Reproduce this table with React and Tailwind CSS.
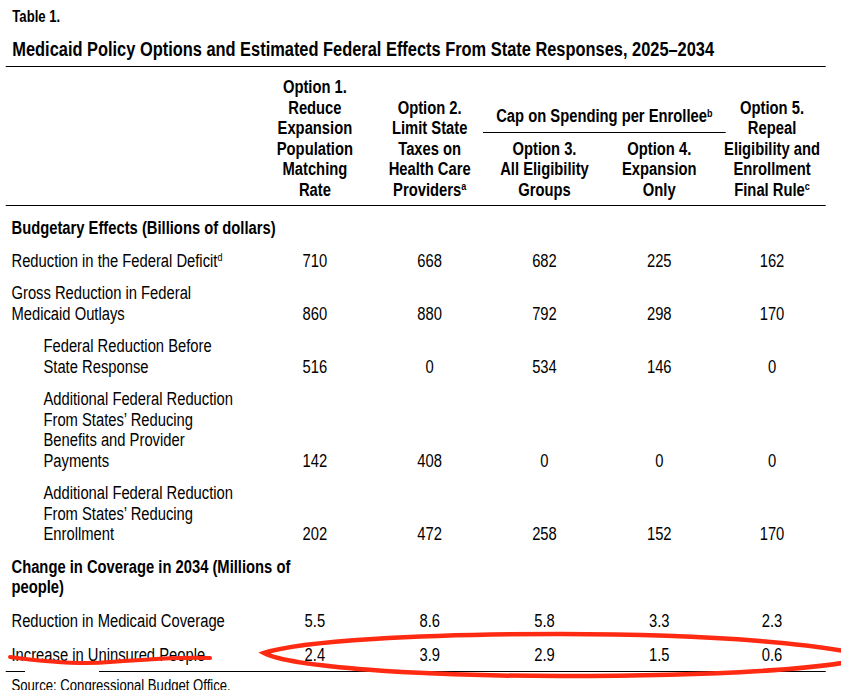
import React from "react";

const font = { fontFamily: '"Liberation Sans", Arial, sans-serif' };

const rows = [
  { label: <>Reduction in the Federal Deficit<sup className="text-[11px]">d</sup></>, vals: ["710", "668", "682", "225", "162"] },
  { label: <>Gross Reduction in Federal<br />Medicaid Outlays</>, vals: ["860", "880", "792", "298", "170"] },
  { label: <>Federal Reduction Before<br />State Response</>, vals: ["516", "0", "534", "146", "0"], indent: true },
  { label: <>Additional Federal Reduction<br />From States’ Reducing<br />Benefits and Provider<br />Payments</>, vals: ["142", "408", "0", "0", "0"], indent: true },
  { label: <>Additional Federal Reduction<br />From States’ Reducing<br />Enrollment</>, vals: ["202", "472", "258", "152", "170"], indent: true },
];

const rows2 = [
  { label: "Reduction in Medicaid Coverage", vals: ["5.5", "8.6", "5.8", "3.3", "2.3"], pt: "pt-[13px]" },
  { label: "Increase in Uninsured People", vals: ["2.4", "3.9", "2.9", "1.5", "0.6"], pt: "pt-[14px]" },
];

const widths = ["w-[134px]", "w-[146px]", "w-[134px]", "w-[146px]", "w-[129px]"];

function Row({ label, vals, indent, pt }) {
  return (
    <div className={`flex items-end ${pt || "pt-[12px]"}`}>
      <div className={`w-[310px] shrink-0 ${indent ? "pl-[46px]" : "pl-[7px]"}`}>{label}</div>
      {vals.map((v, i) => (
        <div key={i} className={`${widths[i]} shrink-0 text-center`}>{v}</div>
      ))}
    </div>
  );
}

export default function App() {
  return (
    <div className="relative w-[841px] h-[690px] overflow-hidden bg-white text-black" style={font}>
      <div className="w-[1026px] origin-top-left scale-x-[0.82]">
        <div className="pl-[15px] pt-[8px] text-[16px] font-bold leading-[18px]">Table 1.</div>
        <div className="pl-[15px] pt-[12px] text-[20px] font-bold leading-[23px]">
          Medicaid Policy Options and Estimated Federal Effects From State Responses, 2025–2034
        </div>
        <div className="ml-[7px] w-[1000px] text-[18px] leading-[20.5px]">
          <div className="mt-[5px] border-t border-black" />
          {/* header */}
          <div className="flex items-end pt-[10px] pb-[5px] font-bold border-b border-black">
            <div className="w-[310px] shrink-0" />
            <div className="w-[134px] shrink-0 text-center">Option 1.<br />Reduce<br />Expansion<br />Population<br />Matching<br />Rate</div>
            <div className="w-[146px] shrink-0 text-center">Option 2.<br />Limit State<br />Taxes on<br />Health Care<br />Providers<sup className="text-[11px]">a</sup></div>
            <div className="w-[280px] shrink-0 flex flex-col">
              <div className="text-center">Cap on Spending per Enrollee<sup className="text-[11px]">b</sup></div>
              <div className="mx-[-8px] mt-[5px] border-t border-black" />
              <div className="flex pt-[6px]">
                <div className="w-[134px] text-center">Option 3.<br />All Eligibility<br />Groups</div>
                <div className="w-[146px] text-center">Option 4.<br />Expansion<br />Only</div>
              </div>
            </div>
            <div className="w-[129px] shrink-0 text-center">Option 5.<br />Repeal<br />Eligibility and<br />Enrollment<br />Final Rule<sup className="text-[11px]">c</sup></div>
          </div>
          <div className="pt-[12px] pl-[7px] font-bold">Budgetary Effects (Billions of dollars)</div>
          {rows.map((r, i) => <Row key={i} {...r} />)}
          <div className="pt-[12px] pl-[7px] font-bold">Change in Coverage in 2034 (Millions of<br />people)</div>
          {rows2.map((r, i) => <Row key={i} {...r} />)}
          <div className="mt-[5px] border-t border-black" />
          <div className="pl-[7px] pt-[5px] text-[16px] leading-[18px]">Source: Congressional Budget Office.</div>
        </div>
      </div>
      <svg className="absolute inset-0 pointer-events-none" width="841" height="690" viewBox="0 0 841 690">
        <rect x="25" y="667" width="74" height="5" fill="white" />
        <path d="M10 657 C 40 661, 80 665, 110 662 C 150 659, 185 657, 210 658" fill="none" stroke="#ff2a12" strokeWidth="4" strokeLinecap="round" />
        <path d="M 560 634 C 420 634, 300 641, 264 653 C 290 667, 420 676, 560 676 C 720 676, 830 669, 870 657 C 830 645, 720 634, 560 634 Z" fill="none" stroke="#ff2a12" strokeWidth="4.5" />
      </svg>
    </div>
  );
}
